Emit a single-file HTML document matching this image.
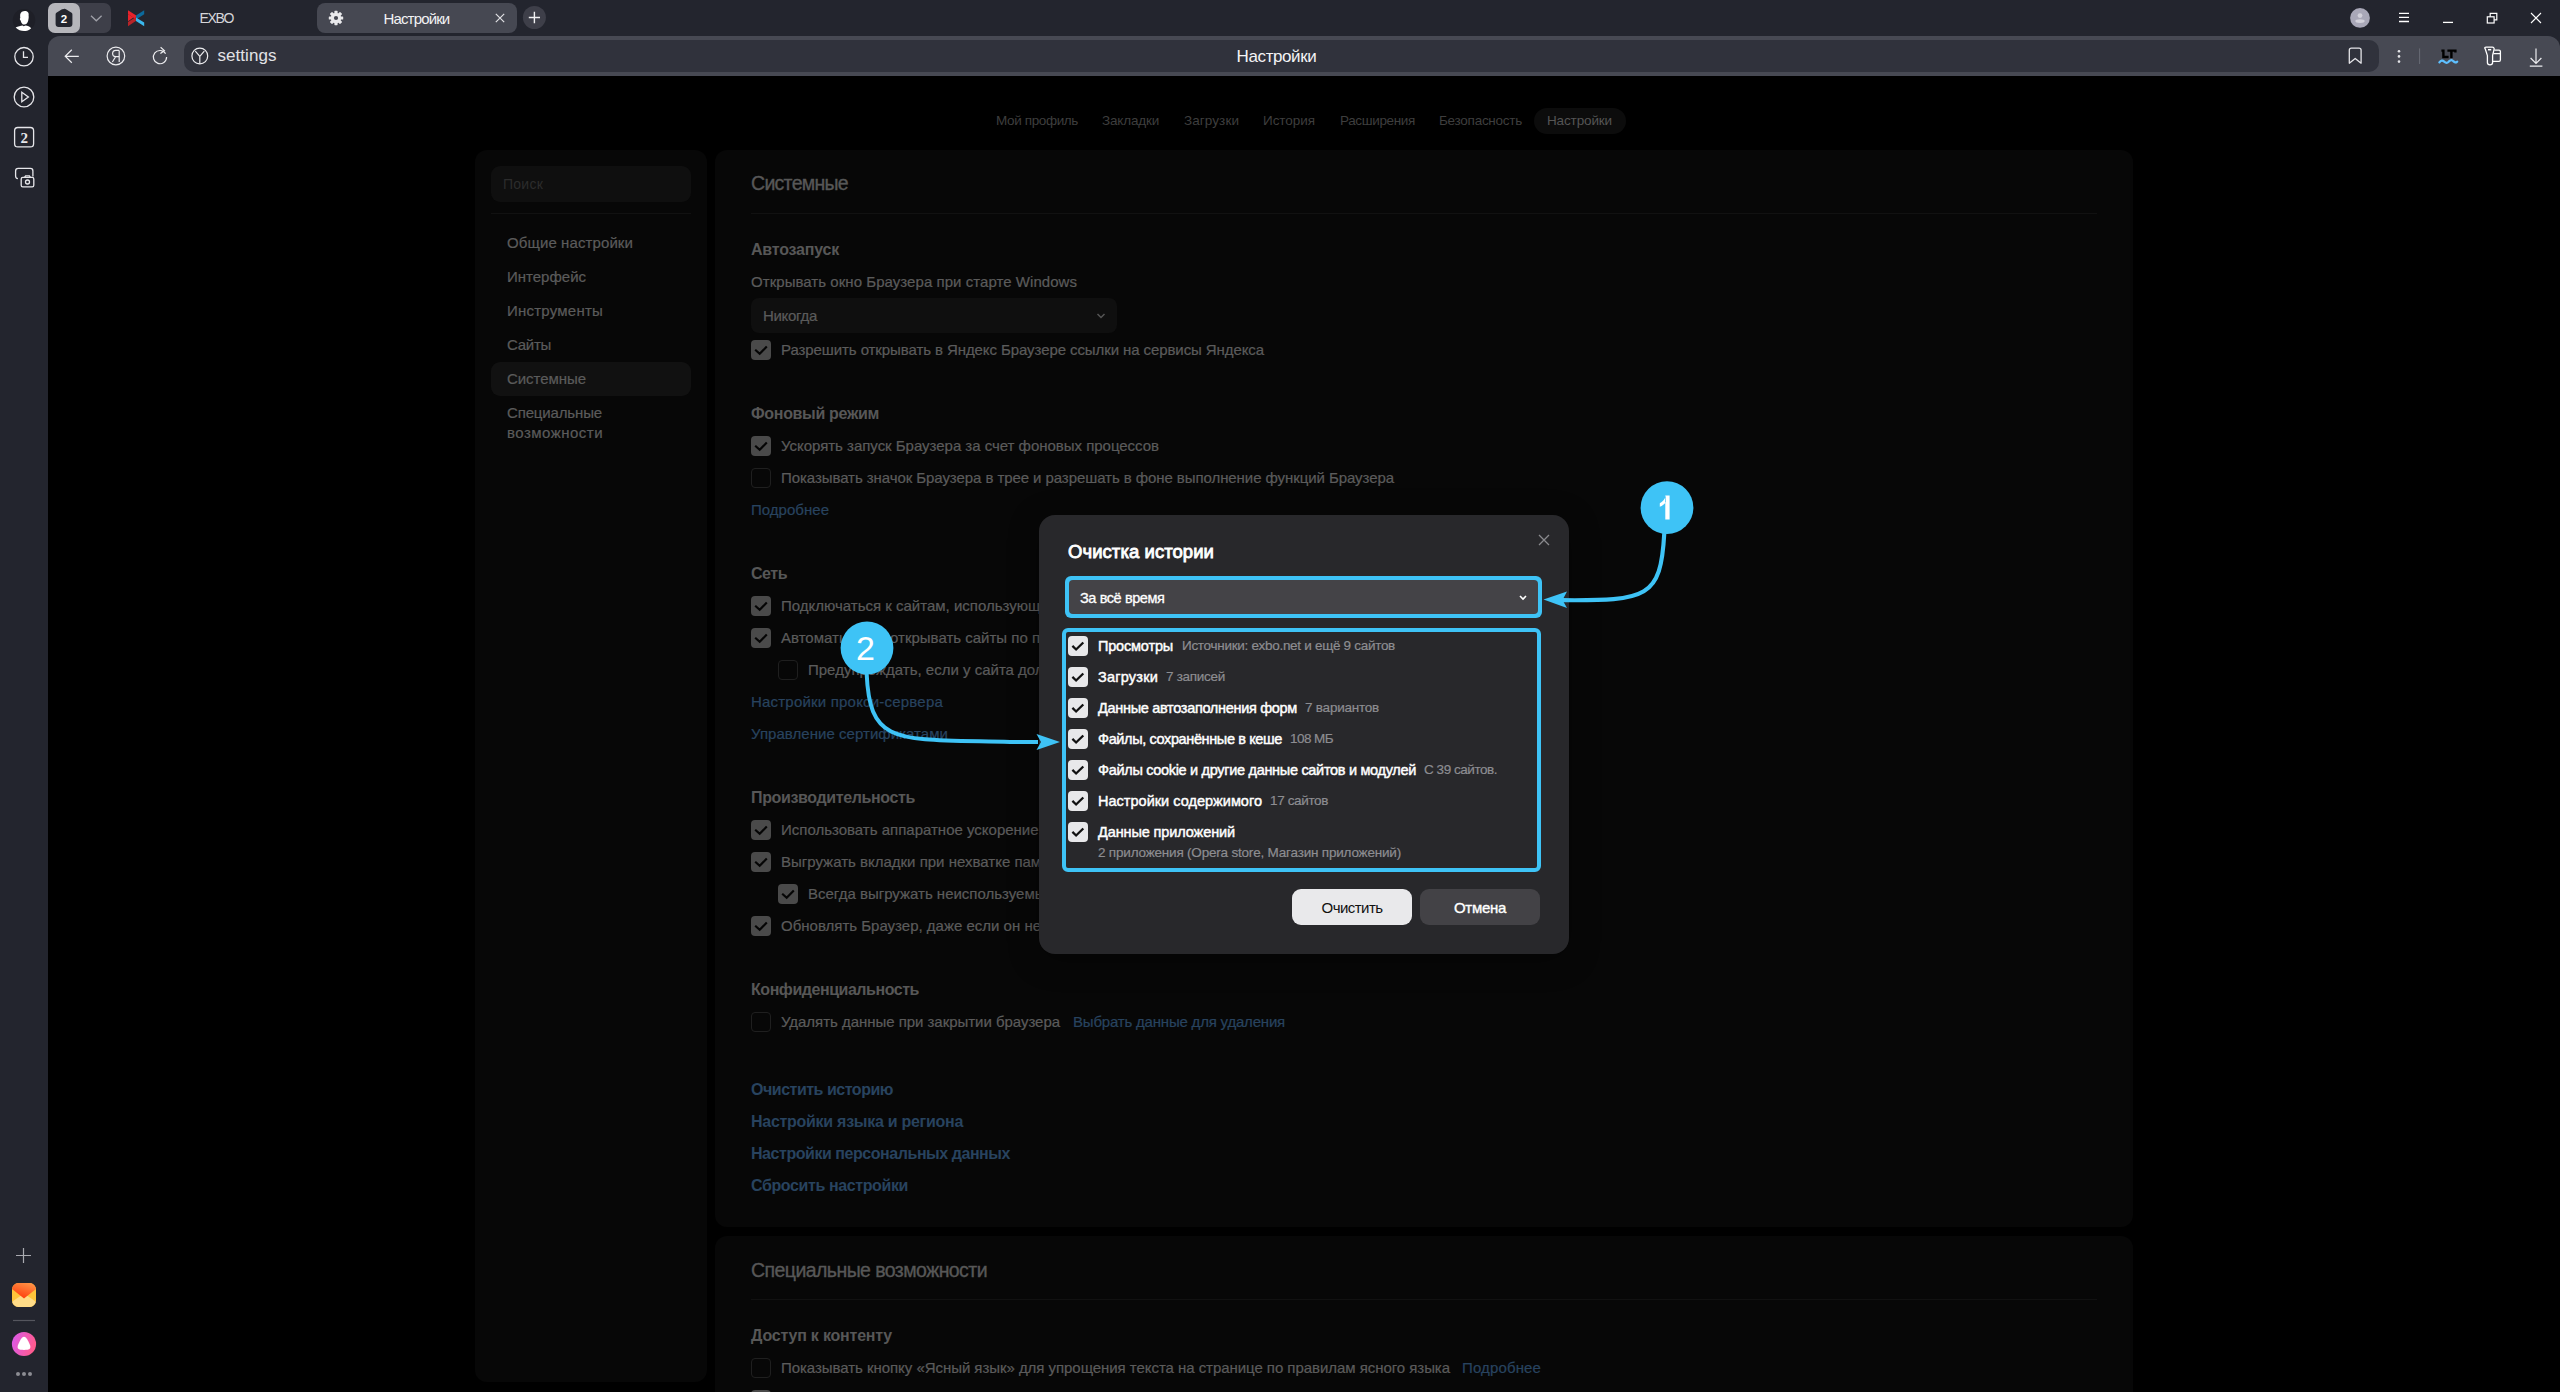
<!DOCTYPE html>
<html><head><meta charset="utf-8">
<style>
*{box-sizing:border-box;margin:0;padding:0}
html,body{width:2560px;height:1392px;overflow:hidden;background:#000;font-family:"Liberation Sans",sans-serif}
.abs{position:absolute}
.t{position:absolute;white-space:nowrap;line-height:1}
svg{position:absolute;overflow:visible}
</style></head><body>
<div class="abs" style="left:0;top:0;width:2560px;height:1392px;background:#23252e"></div>
<div class="abs" style="left:48px;top:76px;width:2512px;height:1316px;background:#000"></div>
<!-- sidebar icons -->
<svg style="left:0;top:0" width="48" height="36" viewBox="0 0 48 36">
<circle cx="24" cy="20.2" r="11.2" fill="#1e1f27"/>
<path d="M20.2 14.5 C20.6 11.6 23.5 10.6 26 11.0 C28.4 11.6 29 13.5 28.6 15.6 C28.9 17.2 28.6 18.8 28.3 20.2 C27.8 22.8 26.3 24.6 24.3 24.6 C22.4 24.6 21.2 22.9 20.6 20.4 C19.6 19.6 19.7 18.2 20.3 17.9 C20.1 16.8 20.1 15.6 20.2 14.5 Z" fill="#fff"/>
<path d="M15.6 27.6 C18 26.2 20.6 25.8 22.6 25.4 L23.6 26.2 L25.6 25.6 C27.6 26 29.6 26.6 31.2 28.2 C29.4 30.2 26.6 31.1 24 31.1 C21.1 31.1 17.8 30.1 15.6 27.6 Z" fill="#fff"/>
</svg>
<svg style="left:0;top:36px" width="48" height="160" viewBox="0 0 48 160">
<g fill="none" stroke="#e6e6ea" stroke-width="1.3">
<circle cx="24" cy="20.7" r="9.2"/>
<path d="M23.5 15.2 V21.4 H28"/>
<circle cx="24" cy="61" r="9.8"/>
<path d="M21.8 56.2 L28.4 61 L21.8 65.8 Z"/>
<rect x="14.6" y="91.5" width="19" height="19.4" rx="3.2"/>
<path d="M17.9 142.7 C16.5 142.5 15.6 141.5 15.6 140 V135 C15.6 133.4 16.6 132.4 18.2 132.4 H30.5 C32 132.4 32.9 133.4 32.9 135 V140.5"/>
<rect x="21.2" y="141.4" width="12.6" height="9.4" rx="1.6"/>
<path d="M24.6 141.4 L25.6 139.8 H29.4 L30.4 141.4"/>
<circle cx="27.5" cy="146" r="2"/>
</g>
<text x="24.2" y="107.4" font-family="Liberation Serif" font-weight="bold" font-size="15" fill="#e6e6ea" text-anchor="middle">2</text>
</svg>
<svg style="left:0;top:1236px" width="48" height="156" viewBox="0 0 48 156">
<path d="M23.5 12 V27 M16 19.5 H31" stroke="#a9aab0" stroke-width="1.2"/>
<defs>
<linearGradient id="mg1" x1="0.9" y1="0" x2="0.35" y2="1"><stop offset="0" stop-color="#ff9a4a"/><stop offset="1" stop-color="#ff3a0c"/></linearGradient>
<linearGradient id="al" x1="0" y1="0" x2="1" y2="0.3"><stop offset="0" stop-color="#d95af0"/><stop offset="1" stop-color="#ff5b8f"/></linearGradient>
</defs>
<clipPath id="mclip"><rect x="12" y="47" width="24" height="24" rx="6.5"/></clipPath>
<g clip-path="url(#mclip)">
<rect x="12" y="47" width="24" height="24" fill="#ffc53a"/>
<path d="M10 67 L24 57.5 L38 67 V72 H10 Z" fill="#ffdc88"/>
<path d="M10 47 H38 V51.5 L24 62.5 L10 51.5 Z" fill="url(#mg1)"/>
</g>
<path d="M13 84.5 H35" stroke="#55565e" stroke-width="1.2"/>
<circle cx="24" cy="108" r="12.1" fill="url(#al)"/>
<path d="M24 100.7 C25.4 100.7 26.6 102 28.4 105.6 C30 108.8 31 111 30 112.6 C29 113.9 26.6 114 24 114 C21.4 114 19 113.9 18 112.6 C17 111 18 108.8 19.6 105.6 C21.4 102 22.6 100.7 24 100.7 Z" fill="#fff"/>
<circle cx="18" cy="138" r="2" fill="#8c8d93"/><circle cx="24" cy="138" r="2" fill="#8c8d93"/><circle cx="30" cy="138" r="2" fill="#8c8d93"/>
</svg>

<!-- tab strip -->
<div class="abs" style="left:48px;top:3px;width:63px;height:30px;background:#3e3f49;border-radius:7px"></div>
<div class="abs" style="left:48px;top:3px;width:32px;height:30px;background:#b6b6bb;border-radius:7px"></div>
<svg style="left:48px;top:3px" width="63" height="30" viewBox="0 0 63 30">
<path d="M15.8 6 C16.6 5.6 17.6 6 18 6.3 L23.6 9.8 C24.2 10.2 24.4 10.8 24.4 11.6 V21 C24.4 23 23.2 24 21.4 24 H10.6 C8.8 24 7.6 23 7.6 21 V11.6 C7.6 10.8 7.8 10.2 8.4 9.8 L14 6.3 Z" fill="#23252e"/>
<text x="16" y="20.2" font-family="Liberation Sans" font-weight="bold" font-size="11.5" fill="#fff" text-anchor="middle">2</text>
<path d="M43 12.8 L48.3 17.8 L53.6 12.8" fill="none" stroke="#9fa0a8" stroke-width="1.3"/>
</svg>
<svg style="left:127px;top:9px" width="18" height="18" viewBox="0 0 18 18">
<path d="M1 1.2 L9.2 6.6 V10.4 L1 5 Z" fill="#e8232b"/>
<path d="M1 5 L6.4 8.6 L1 12.2 Z" fill="#e8232b"/>
<path d="M1 17.2 V13 L9.2 7.8 V11.8 Z" fill="#b82428"/>
<path d="M17.2 1.2 V5.2 L9 10.4 V6.6 Z" fill="#0c6a9c"/>
<path d="M17.2 17.2 L9 12 V8.4 L17.2 13.4 Z" fill="#3ab8ee"/>
</svg>
<div class="t" style="left:199.5px;top:11.3px;font-size:14px;color:#d6d6da;letter-spacing:-1.3px">EXBO</div>

<div class="abs" style="left:317px;top:3px;width:200px;height:30px;background:#464852;border-radius:8px"></div>
<svg style="left:328px;top:10px" width="16" height="16" viewBox="0 0 16 16">
<g fill="#e9e9ec">
<circle cx="8" cy="8" r="5.2"/>
<rect x="6.4" y="0.8" width="3.2" height="3.4" rx="0.6"/>
<rect x="6.4" y="11.8" width="3.2" height="3.4" rx="0.6"/>
<rect x="0.8" y="6.4" width="3.4" height="3.2" rx="0.6"/>
<rect x="11.8" y="6.4" width="3.4" height="3.2" rx="0.6"/>
<rect x="6.4" y="0.8" width="3.2" height="3.4" rx="0.6" transform="rotate(45 8 8)"/>
<rect x="6.4" y="11.8" width="3.2" height="3.4" rx="0.6" transform="rotate(45 8 8)"/>
<rect x="0.8" y="6.4" width="3.4" height="3.2" rx="0.6" transform="rotate(45 8 8)"/>
<rect x="11.8" y="6.4" width="3.4" height="3.2" rx="0.6" transform="rotate(45 8 8)"/>
</g>
<circle cx="8" cy="8" r="2.1" fill="#464852"/>
</svg>
<div class="t" style="left:383.5px;top:10.8px;font-size:15px;color:#f2f2f4;letter-spacing:-0.85px">Настройки</div>
<svg style="left:495px;top:13px" width="10" height="10" viewBox="0 0 10 10"><path d="M0.8 0.8 L9.2 9.2 M9.2 0.8 L0.8 9.2" stroke="#e0e0e4" stroke-width="1.2"/></svg>
<svg style="left:522px;top:5px" width="25" height="25" viewBox="0 0 25 25"><circle cx="12.4" cy="12.5" r="11.5" fill="#3e3f49"/><path d="M12.4 6.8 V18.2 M6.8 12.5 H18" stroke="#f0f0f2" stroke-width="1.4"/></svg>

<svg style="left:2340px;top:0" width="220" height="36" viewBox="0 0 220 36">
<circle cx="20" cy="17.9" r="9.9" fill="#a9a8b8"/>
<circle cx="20" cy="15.6" r="2.4" fill="#d2d1da"/>
<ellipse cx="20" cy="21.1" rx="4.7" ry="1.9" fill="#d2d1da"/>
<path d="M59 13.3 H69 M59 17.4 H69 M59 21.5 H69" stroke="#fff" stroke-width="1.3"/>
<path d="M103 22.4 H113" stroke="#fff" stroke-width="1.3"/>
<rect x="147.3" y="16.8" width="6.8" height="6.2" fill="none" stroke="#fff" stroke-width="1.2"/>
<path d="M150.2 16.8 V13.4 H156.8 V19.8 H154.1" fill="none" stroke="#fff" stroke-width="1.2"/>
<path d="M191 13 L201 23 M201 13 L191 23" stroke="#fff" stroke-width="1.1"/>
</svg>
<!-- toolbar -->
<div class="abs" style="left:48px;top:36px;width:2512px;height:40px;background:#474953;border-radius:12px 12px 0 0"></div>
<div class="abs" style="left:184px;top:40px;width:2195px;height:32px;background:#30323c;border-radius:10px"></div>
<svg style="left:48px;top:36px" width="240" height="40" viewBox="0 0 240 40">
<g fill="none" stroke="#ececef" stroke-width="1.2">
<path d="M30.8 20.3 H17.2 M23.8 13.8 L17.2 20.3 L23.8 26.8"/>
<circle cx="67.9" cy="20" r="8.8"/>
<path d="M71.2 14.4 V26 M71.2 14.4 H67.8 C65.6 14.4 64.6 15.8 64.6 17.6 C64.6 19.4 65.6 20.7 67.8 20.7 H71.2 M67.6 20.7 L64.4 26"/>
<path d="M117.6 17.6 A6.6 6.6 0 1 0 118.6 21 M112.6 11.3 L116.4 14.6 L112.4 17.6"/>
<circle cx="151.8" cy="20" r="7.9"/>
<path d="M147.3 15.2 L151.8 20.4 L156.3 15.2 M151.8 20.4 V27.8"/>
</g>
</svg>
<div class="t" style="left:217.5px;top:46.7px;font-size:17px;color:#e2e2e6;letter-spacing:0.05px">settings</div>
<div class="t" style="left:1236.6px;top:47.6px;font-size:17px;color:#f4f4f6;letter-spacing:-0.4px">Настройки</div>
<svg style="left:2340px;top:36px" width="220" height="40" viewBox="0 0 220 40">
<path d="M9.3 27.2 V14.2 C9.3 12.8 10.1 12.2 11.4 12.2 H19 C20.3 12.2 21.1 12.8 21.1 14.2 V27.2 L15.2 22.4 Z" fill="none" stroke="#e4e4e8" stroke-width="1.3" stroke-linejoin="round"/>
<circle cx="59" cy="15.2" r="1.3" fill="#e4e4e8"/><circle cx="59" cy="20.4" r="1.3" fill="#e4e4e8"/><circle cx="59" cy="25.6" r="1.3" fill="#e4e4e8"/>
<path d="M79.6 12.4 V28" stroke="#686a74" stroke-width="1"/>
<g fill="none" stroke="#000" stroke-width="2.4" stroke-linejoin="miter">
<path d="M101.4 14.6 H103.4 V21 H108.6"/>
<path d="M107.4 14.6 H115.4 V16.4 M111.4 14.6 V22"/>
</g>
<path d="M99.4 26.4 C101 24.2 102.6 24.2 104.2 25.6 C106 27.2 107.6 27.2 109 25.4 C110.6 23.8 112.2 23.8 113.6 25.4 C115 26.8 116.4 26.8 117.2 25.6" fill="none" stroke="#5ec0ff" stroke-width="2.3" stroke-linecap="round"/>
<g fill="none" stroke="#fff" stroke-width="1.3" stroke-linejoin="round">
<path d="M145.2 12.8 C144.2 11.8 144.8 11.2 146.2 11.2 H152.4 C153.4 11.2 154 11.8 154.2 12.8 L152.6 19.4 V26.6 C152.6 27.8 151.6 28.8 150 28.8 C148.4 28.8 147.4 27.8 147.4 26.6 V19.6 Z"/>
<path d="M148 13.7 H151.2" stroke-width="1.5"/>
<path d="M154.3 14.2 H159 C159.9 14.2 160.4 14.8 160.4 15.6 V23.8 C160.4 24.8 159.9 25.4 159 25.4 H152.8 M153.4 17.7 H160.4"/>
</g>
<path d="M196 12.4 V27.4 M190.6 22 L196 27.4 L201.4 22 M189.8 30.2 H202.4" fill="none" stroke="#ececef" stroke-width="1.2"/>
</svg>

<div class="abs" style="left:0;top:0;width:2560px;height:1392px;overflow:hidden">
<div class="abs" style="left:475px;top:150px;width:232px;height:1232px;background:#070707;border-radius:12px;"></div>
<div class="abs" style="left:715px;top:150px;width:1418px;height:1077px;background:#070707;border-radius:12px;"></div>
<div class="abs" style="left:715px;top:1236px;width:1418px;height:200px;background:#070707;border-radius:12px;"></div>
<div class="abs" style="left:1534px;top:108px;width:92px;height:26px;background:#0c0c0c;border-radius:13px;"></div>
<div class="t" style="left:996.0px;top:114.29px;font-size:13.50px;color:#3e3e3e;letter-spacing:-0.371px;">Мой профиль</div>
<div class="t" style="left:1102.0px;top:114.29px;font-size:13.50px;color:#3e3e3e;letter-spacing:-0.179px;">Закладки</div>
<div class="t" style="left:1184.0px;top:114.29px;font-size:13.50px;color:#3e3e3e;letter-spacing:0.084px;">Загрузки</div>
<div class="t" style="left:1263.0px;top:114.29px;font-size:13.50px;color:#3e3e3e;letter-spacing:-0.050px;">История</div>
<div class="t" style="left:1340.0px;top:114.29px;font-size:13.50px;color:#3e3e3e;letter-spacing:-0.351px;">Расширения</div>
<div class="t" style="left:1439.0px;top:114.29px;font-size:13.50px;color:#3e3e3e;letter-spacing:-0.260px;">Безопасность</div>
<div class="t" style="left:1547.0px;top:114.29px;font-size:13.50px;color:#555555;letter-spacing:-0.133px;">Настройки</div>
<div class="abs" style="left:491px;top:166px;width:200px;height:36px;background:#0f0f0f;border-radius:9px;"></div>
<div class="t" style="left:503.0px;top:177.25px;font-size:14.00px;color:#2c2c2c;letter-spacing:0.241px;">Поиск</div>
<div class="abs" style="left:491px;top:213px;width:200px;height:1px;background:#111111;border-radius:0px;"></div>
<div class="abs" style="left:491px;top:362px;width:200px;height:34px;background:#111111;border-radius:9px;"></div>
<div class="t" style="left:507.0px;top:235.27px;font-size:15.00px;color:#5b5b5b;letter-spacing:0.101px;-webkit-text-stroke:0.22px #5b5b5b;">Общие настройки</div>
<div class="t" style="left:507.0px;top:269.27px;font-size:15.00px;color:#5b5b5b;letter-spacing:-0.001px;-webkit-text-stroke:0.22px #5b5b5b;">Интерфейс</div>
<div class="t" style="left:507.0px;top:303.27px;font-size:15.00px;color:#5b5b5b;letter-spacing:0.225px;-webkit-text-stroke:0.22px #5b5b5b;">Инструменты</div>
<div class="t" style="left:507.0px;top:337.27px;font-size:15.00px;color:#5b5b5b;letter-spacing:-0.275px;-webkit-text-stroke:0.22px #5b5b5b;">Сайты</div>
<div class="t" style="left:507.0px;top:371.27px;font-size:15.00px;color:#5b5b5b;letter-spacing:-0.053px;-webkit-text-stroke:0.22px #5b5b5b;">Системные</div>
<div class="t" style="left:507.0px;top:405.27px;font-size:15.00px;color:#5b5b5b;letter-spacing:-0.144px;-webkit-text-stroke:0.22px #5b5b5b;">Специальные</div>
<div class="t" style="left:507.0px;top:425.27px;font-size:15.00px;color:#5b5b5b;letter-spacing:0.478px;-webkit-text-stroke:0.22px #5b5b5b;">возможности</div>
<div class="t" style="left:751.0px;top:174.30px;font-size:19.50px;color:#575757;letter-spacing:-0.702px;-webkit-text-stroke:0.35px #575757;">Системные</div>
<div class="abs" style="left:751px;top:213px;width:1346px;height:1px;background:#111111;border-radius:0px;"></div>
<div class="t" style="left:751.0px;top:241.79px;font-size:16.00px;color:#575757;font-weight:bold;letter-spacing:-0.208px;">Автозапуск</div>
<div class="t" style="left:751.0px;top:274.27px;font-size:15.00px;color:#5b5b5b;letter-spacing:0.048px;-webkit-text-stroke:0.22px #5b5b5b;">Открывать окно Браузера при старте Windows</div>
<div class="abs" style="left:751px;top:298px;width:366px;height:35px;background:#0f0f0f;border-radius:8px;"></div>
<div class="t" style="left:763.0px;top:308.27px;font-size:15.00px;color:#5b5b5b;letter-spacing:-0.311px;-webkit-text-stroke:0.22px #5b5b5b;">Никогда</div>
<svg style="left:1096px;top:312px" width="10" height="8" viewBox="0 0 10 8"><path d="M1.5 2 L5 5.5 L8.5 2" fill="none" stroke="#555" stroke-width="1.5"/></svg>
<div class="abs" style="left:751px;top:340px;width:20px;height:20px;background:#4a4a4a;border-radius:4px;"></div>
<svg style="left:751px;top:340px" width="20" height="20" viewBox="0 0 20 20"><path d="M4.2 9.8 L8.7 13.8 L15.8 6.6" fill="none" stroke="#050505" stroke-width="2.2"/></svg>
<div class="t" style="left:781.0px;top:342.27px;font-size:15.00px;color:#5b5b5b;letter-spacing:-0.086px;-webkit-text-stroke:0.22px #5b5b5b;">Разрешить открывать в Яндекс Браузере ссылки на сервисы Яндекса</div>
<div class="t" style="left:751.0px;top:405.79px;font-size:16.00px;color:#575757;font-weight:bold;letter-spacing:-0.317px;">Фоновый режим</div>
<div class="abs" style="left:751px;top:436px;width:20px;height:20px;background:#4a4a4a;border-radius:4px;"></div>
<svg style="left:751px;top:436px" width="20" height="20" viewBox="0 0 20 20"><path d="M4.2 9.8 L8.7 13.8 L15.8 6.6" fill="none" stroke="#050505" stroke-width="2.2"/></svg>
<div class="t" style="left:781.0px;top:438.27px;font-size:15.00px;color:#5b5b5b;letter-spacing:-0.022px;-webkit-text-stroke:0.22px #5b5b5b;">Ускорять запуск Браузера за счет фоновых процессов</div>
<div class="abs" style="left:751px;top:468px;width:20px;height:20px;background:transparent;border-radius:4px;border:1px solid #1f1f1f;"></div>
<div class="t" style="left:781.0px;top:470.27px;font-size:15.00px;color:#5b5b5b;letter-spacing:-0.072px;-webkit-text-stroke:0.22px #5b5b5b;">Показывать значок Браузера в трее и разрешать в фоне выполнение функций Браузера</div>
<div class="t" style="left:751.0px;top:502.27px;font-size:15.00px;color:#28435f;letter-spacing:0.023px;-webkit-text-stroke:0.22px #28435f;">Подробнее</div>
<div class="t" style="left:751.0px;top:565.79px;font-size:16.00px;color:#575757;font-weight:bold;letter-spacing:-0.479px;">Сеть</div>
<div class="abs" style="left:751px;top:596px;width:20px;height:20px;background:#4a4a4a;border-radius:4px;"></div>
<svg style="left:751px;top:596px" width="20" height="20" viewBox="0 0 20 20"><path d="M4.2 9.8 L8.7 13.8 L15.8 6.6" fill="none" stroke="#050505" stroke-width="2.2"/></svg>
<div class="t" style="left:781.0px;top:598.27px;font-size:15.00px;color:#5b5b5b;-webkit-text-stroke:0.22px #5b5b5b;">Подключаться к сайтам, использующим шифрование по ГОСТ. Требуется КриптоПро CSP</div>
<div class="abs" style="left:751px;top:628px;width:20px;height:20px;background:#4a4a4a;border-radius:4px;"></div>
<svg style="left:751px;top:628px" width="20" height="20" viewBox="0 0 20 20"><path d="M4.2 9.8 L8.7 13.8 L15.8 6.6" fill="none" stroke="#050505" stroke-width="2.2"/></svg>
<div class="t" style="left:781.0px;top:630.27px;font-size:15.00px;color:#5b5b5b;-webkit-text-stroke:0.22px #5b5b5b;">Автоматически открывать сайты по протоколу HTTPS</div>
<div class="abs" style="left:778px;top:660px;width:20px;height:20px;background:transparent;border-radius:4px;border:1px solid #1f1f1f;"></div>
<div class="t" style="left:808.0px;top:662.27px;font-size:15.00px;color:#5b5b5b;-webkit-text-stroke:0.22px #5b5b5b;">Предупреждать, если у сайта должен быть сертификат</div>
<div class="t" style="left:751.0px;top:694.27px;font-size:15.00px;color:#28435f;letter-spacing:0.202px;-webkit-text-stroke:0.22px #28435f;">Настройки прокси-сервера</div>
<div class="t" style="left:751.0px;top:726.27px;font-size:15.00px;color:#28435f;letter-spacing:0.041px;-webkit-text-stroke:0.22px #28435f;">Управление сертификатами</div>
<div class="t" style="left:751.0px;top:789.79px;font-size:16.00px;color:#575757;font-weight:bold;letter-spacing:-0.364px;">Производительность</div>
<div class="abs" style="left:751px;top:820px;width:20px;height:20px;background:#4a4a4a;border-radius:4px;"></div>
<svg style="left:751px;top:820px" width="20" height="20" viewBox="0 0 20 20"><path d="M4.2 9.8 L8.7 13.8 L15.8 6.6" fill="none" stroke="#050505" stroke-width="2.2"/></svg>
<div class="t" style="left:781.0px;top:822.27px;font-size:15.00px;color:#5b5b5b;-webkit-text-stroke:0.22px #5b5b5b;">Использовать аппаратное ускорение, если возможно</div>
<div class="abs" style="left:751px;top:852px;width:20px;height:20px;background:#4a4a4a;border-radius:4px;"></div>
<svg style="left:751px;top:852px" width="20" height="20" viewBox="0 0 20 20"><path d="M4.2 9.8 L8.7 13.8 L15.8 6.6" fill="none" stroke="#050505" stroke-width="2.2"/></svg>
<div class="t" style="left:781.0px;top:854.27px;font-size:15.00px;color:#5b5b5b;-webkit-text-stroke:0.22px #5b5b5b;">Выгружать вкладки при нехватке памяти</div>
<div class="abs" style="left:778px;top:884px;width:20px;height:20px;background:#4a4a4a;border-radius:4px;"></div>
<svg style="left:778px;top:884px" width="20" height="20" viewBox="0 0 20 20"><path d="M4.2 9.8 L8.7 13.8 L15.8 6.6" fill="none" stroke="#050505" stroke-width="2.2"/></svg>
<div class="t" style="left:808.0px;top:886.27px;font-size:15.00px;color:#5b5b5b;-webkit-text-stroke:0.22px #5b5b5b;">Всегда выгружать неиспользуемые вкладки</div>
<div class="abs" style="left:751px;top:916px;width:20px;height:20px;background:#4a4a4a;border-radius:4px;"></div>
<svg style="left:751px;top:916px" width="20" height="20" viewBox="0 0 20 20"><path d="M4.2 9.8 L8.7 13.8 L15.8 6.6" fill="none" stroke="#050505" stroke-width="2.2"/></svg>
<div class="t" style="left:781.0px;top:918.27px;font-size:15.00px;color:#5b5b5b;-webkit-text-stroke:0.22px #5b5b5b;">Обновлять Браузер, даже если он не запущен</div>
<div class="t" style="left:751.0px;top:981.79px;font-size:16.00px;color:#575757;font-weight:bold;letter-spacing:-0.451px;">Конфиденциальность</div>
<div class="abs" style="left:751px;top:1012px;width:20px;height:20px;background:transparent;border-radius:4px;border:1px solid #1f1f1f;"></div>
<div class="t" style="left:781.0px;top:1014.27px;font-size:15.00px;color:#5b5b5b;letter-spacing:-0.033px;-webkit-text-stroke:0.22px #5b5b5b;">Удалять данные при закрытии браузера</div>
<div class="t" style="left:1073.0px;top:1014.27px;font-size:15.00px;color:#28435f;letter-spacing:-0.197px;-webkit-text-stroke:0.22px #28435f;">Выбрать данные для удаления</div>
<div class="t" style="left:751.0px;top:1081.79px;font-size:16.00px;color:#28435f;font-weight:bold;letter-spacing:-0.479px;">Очистить историю</div>
<div class="t" style="left:751.0px;top:1113.79px;font-size:16.00px;color:#28435f;font-weight:bold;letter-spacing:-0.278px;">Настройки языка и региона</div>
<div class="t" style="left:751.0px;top:1145.79px;font-size:16.00px;color:#28435f;font-weight:bold;letter-spacing:-0.450px;">Настройки персональных данных</div>
<div class="t" style="left:751.0px;top:1177.79px;font-size:16.00px;color:#28435f;font-weight:bold;letter-spacing:-0.385px;">Сбросить настройки</div>
<div class="t" style="left:751.0px;top:1260.60px;font-size:19.50px;color:#575757;letter-spacing:-0.563px;-webkit-text-stroke:0.35px #575757;">Специальные возможности</div>
<div class="abs" style="left:751px;top:1299px;width:1346px;height:1px;background:#111111;border-radius:0px;"></div>
<div class="t" style="left:751.0px;top:1327.79px;font-size:16.00px;color:#575757;font-weight:bold;letter-spacing:-0.207px;">Доступ к контенту</div>
<div class="abs" style="left:751px;top:1358px;width:20px;height:20px;background:transparent;border-radius:4px;border:1px solid #1f1f1f;"></div>
<div class="t" style="left:781.0px;top:1360.27px;font-size:15.00px;color:#5b5b5b;letter-spacing:-0.047px;-webkit-text-stroke:0.22px #5b5b5b;">Показывать кнопку «Ясный язык» для упрощения текста на странице по правилам ясного языка</div>
<div class="t" style="left:1462.0px;top:1360.27px;font-size:15.00px;color:#28435f;letter-spacing:0.134px;-webkit-text-stroke:0.22px #28435f;">Подробнее</div>
<div class="abs" style="left:751px;top:1390px;width:20px;height:20px;background:#4a4a4a;border-radius:4px;"></div>
<svg style="left:751px;top:1390px" width="20" height="20" viewBox="0 0 20 20"><path d="M4.2 9.8 L8.7 13.8 L15.8 6.6" fill="none" stroke="#050505" stroke-width="2.2"/></svg>
</div>
<div class="abs" style="left:1039px;top:515px;width:530px;height:439px;background:#28282b;border-radius:16px;box-shadow:0 6px 30px rgba(0,0,0,0.35);"></div>
<svg style="left:1538px;top:534px" width="12" height="12" viewBox="0 0 12 12"><path d="M1 1 L11 11 M11 1 L1 11" stroke="#8a8a8e" stroke-width="1.3"/></svg>
<div class="t" style="left:1068.0px;top:542.78px;font-size:18.50px;color:#ffffff;letter-spacing:0.059px;-webkit-text-stroke:0.85px #ffffff;">Очистка истории</div>
<div class="abs" style="left:1065px;top:576px;width:477px;height:42px;background:#3ec3f6;border-radius:6px;"></div>
<div class="abs" style="left:1069px;top:580px;width:469px;height:34px;background:#444347;border-radius:4px;"></div>
<div class="t" style="left:1080.0px;top:590.71px;font-size:14.50px;color:#ffffff;letter-spacing:-0.407px;-webkit-text-stroke:0.30px #ffffff;">За всё время</div>
<svg style="left:1518px;top:594px" width="10" height="8" viewBox="0 0 10 8"><path d="M2 2 L5 5 L8 2" fill="none" stroke="#fff" stroke-width="1.6"/></svg>
<div class="abs" style="left:1062px;top:628px;width:479px;height:244px;background:transparent;border-radius:6px;border:4px solid #3ec3f6;"></div>
<div class="abs" style="left:1068px;top:636px;width:20px;height:20px;background:#e8e8ea;border-radius:4px;"></div>
<svg style="left:1068px;top:636px" width="20" height="20" viewBox="0 0 20 20"><path d="M4.4 9.9 L8.1 13.5 L15.3 6.5" fill="none" stroke="#111" stroke-width="2.3"/></svg>
<div class="t" style="left:1098.0px;top:639.01px;font-size:14.50px;color:#ffffff;letter-spacing:-0.182px;-webkit-text-stroke:0.45px #ffffff;">Просмотры</div>
<div class="t" style="left:1182.0px;top:639.49px;font-size:13.50px;color:#8d8d91;letter-spacing:-0.299px;-webkit-text-stroke:0.20px #8d8d91;">Источники: exbo.net и ещё 9 сайтов</div>
<div class="abs" style="left:1068px;top:667px;width:20px;height:20px;background:#e8e8ea;border-radius:4px;"></div>
<svg style="left:1068px;top:667px" width="20" height="20" viewBox="0 0 20 20"><path d="M4.4 9.9 L8.1 13.5 L15.3 6.5" fill="none" stroke="#111" stroke-width="2.3"/></svg>
<div class="t" style="left:1098.0px;top:670.01px;font-size:14.50px;color:#ffffff;letter-spacing:0.206px;-webkit-text-stroke:0.45px #ffffff;">Загрузки</div>
<div class="t" style="left:1166.0px;top:670.49px;font-size:13.50px;color:#8d8d91;letter-spacing:-0.290px;-webkit-text-stroke:0.20px #8d8d91;">7 записей</div>
<div class="abs" style="left:1068px;top:698px;width:20px;height:20px;background:#e8e8ea;border-radius:4px;"></div>
<svg style="left:1068px;top:698px" width="20" height="20" viewBox="0 0 20 20"><path d="M4.4 9.9 L8.1 13.5 L15.3 6.5" fill="none" stroke="#111" stroke-width="2.3"/></svg>
<div class="t" style="left:1098.0px;top:701.01px;font-size:14.50px;color:#ffffff;letter-spacing:-0.312px;-webkit-text-stroke:0.45px #ffffff;">Данные автозаполнения форм</div>
<div class="t" style="left:1305.0px;top:701.49px;font-size:13.50px;color:#8d8d91;letter-spacing:-0.228px;-webkit-text-stroke:0.20px #8d8d91;">7 вариантов</div>
<div class="abs" style="left:1068px;top:729px;width:20px;height:20px;background:#e8e8ea;border-radius:4px;"></div>
<svg style="left:1068px;top:729px" width="20" height="20" viewBox="0 0 20 20"><path d="M4.4 9.9 L8.1 13.5 L15.3 6.5" fill="none" stroke="#111" stroke-width="2.3"/></svg>
<div class="t" style="left:1098.0px;top:732.01px;font-size:14.50px;color:#ffffff;letter-spacing:-0.377px;-webkit-text-stroke:0.45px #ffffff;">Файлы, сохранённые в кеше</div>
<div class="t" style="left:1290.0px;top:732.49px;font-size:13.50px;color:#8d8d91;letter-spacing:-0.563px;-webkit-text-stroke:0.20px #8d8d91;">108 МБ</div>
<div class="abs" style="left:1068px;top:760px;width:20px;height:20px;background:#e8e8ea;border-radius:4px;"></div>
<svg style="left:1068px;top:760px" width="20" height="20" viewBox="0 0 20 20"><path d="M4.4 9.9 L8.1 13.5 L15.3 6.5" fill="none" stroke="#111" stroke-width="2.3"/></svg>
<div class="t" style="left:1098.0px;top:763.01px;font-size:14.50px;color:#ffffff;letter-spacing:-0.308px;-webkit-text-stroke:0.45px #ffffff;">Файлы cookie и другие данные сайтов и модулей</div>
<div class="t" style="left:1424.0px;top:763.49px;font-size:13.50px;color:#8d8d91;letter-spacing:-0.461px;-webkit-text-stroke:0.20px #8d8d91;">С 39 сайтов.</div>
<div class="abs" style="left:1068px;top:791px;width:20px;height:20px;background:#e8e8ea;border-radius:4px;"></div>
<svg style="left:1068px;top:791px" width="20" height="20" viewBox="0 0 20 20"><path d="M4.4 9.9 L8.1 13.5 L15.3 6.5" fill="none" stroke="#111" stroke-width="2.3"/></svg>
<div class="t" style="left:1098.0px;top:794.01px;font-size:14.50px;color:#ffffff;letter-spacing:0.012px;-webkit-text-stroke:0.45px #ffffff;">Настройки содержимого</div>
<div class="t" style="left:1270.0px;top:794.49px;font-size:13.50px;color:#8d8d91;letter-spacing:-0.364px;-webkit-text-stroke:0.20px #8d8d91;">17 сайтов</div>
<div class="abs" style="left:1068px;top:822px;width:20px;height:20px;background:#e8e8ea;border-radius:4px;"></div>
<svg style="left:1068px;top:822px" width="20" height="20" viewBox="0 0 20 20"><path d="M4.4 9.9 L8.1 13.5 L15.3 6.5" fill="none" stroke="#111" stroke-width="2.3"/></svg>
<div class="t" style="left:1098.0px;top:825.01px;font-size:14.50px;color:#ffffff;letter-spacing:-0.113px;-webkit-text-stroke:0.45px #ffffff;">Данные приложений</div>
<div class="t" style="left:1098.0px;top:845.99px;font-size:13.50px;color:#8d8d91;letter-spacing:-0.196px;-webkit-text-stroke:0.20px #8d8d91;">2 приложения (Opera store, Магазин приложений)</div>
<div class="abs" style="left:1292px;top:889px;width:120px;height:36px;background:#e9e9eb;border-radius:9px;"></div>
<div class="t" style="left:1321.5px;top:899.77px;font-size:15.00px;color:#111111;letter-spacing:-0.537px;">Очистить</div>
<div class="abs" style="left:1420px;top:889px;width:120px;height:36px;background:#434246;border-radius:9px;"></div>
<div class="t" style="left:1454.0px;top:899.77px;font-size:15.00px;color:#ffffff;letter-spacing:-0.303px;-webkit-text-stroke:0.35px #ffffff;">Отмена</div>
<svg style="left:0;top:0" width="2560" height="1392" viewBox="0 0 2560 1392">
<path d="M1664.3 533 C1660.76 598.17 1647.27 600.91 1562 600.2" fill="none" stroke="#3ec3f6" stroke-width="4.2"/>
<path d="M1543.5 599.6 L1567 591.6 L1562.5 600 L1567 608 Z" fill="#3ec3f6"/>
<circle cx="1667" cy="507.7" r="26.4" fill="#3ec3f6"/>
<path d="M866.6 673 C869.8 746.34 896.12 739.06 1010 742 L1038 742" fill="none" stroke="#3ec3f6" stroke-width="4"/>
<path d="M1060 742 L1036.5 734 L1041 742 L1036.5 750 Z" fill="#3ec3f6"/>
<circle cx="867" cy="648" r="26.4" fill="#3ec3f6"/>
</svg>
<svg style="left:0;top:0" width="2560" height="1392"><path d="M1665.3 519.6 V495.6 H1669.6 V519.6 Z M1665.8 496 C1664.6 499.6 1662.4 502 1659.8 503.2 V506.8 C1662.4 505.8 1664.6 504.2 1666 502 Z" fill="#fff"/></svg>
<div class="t" style="left:856.1px;top:630.81px;font-size:34.00px;color:#ffffff;">2</div>
</body></html>
